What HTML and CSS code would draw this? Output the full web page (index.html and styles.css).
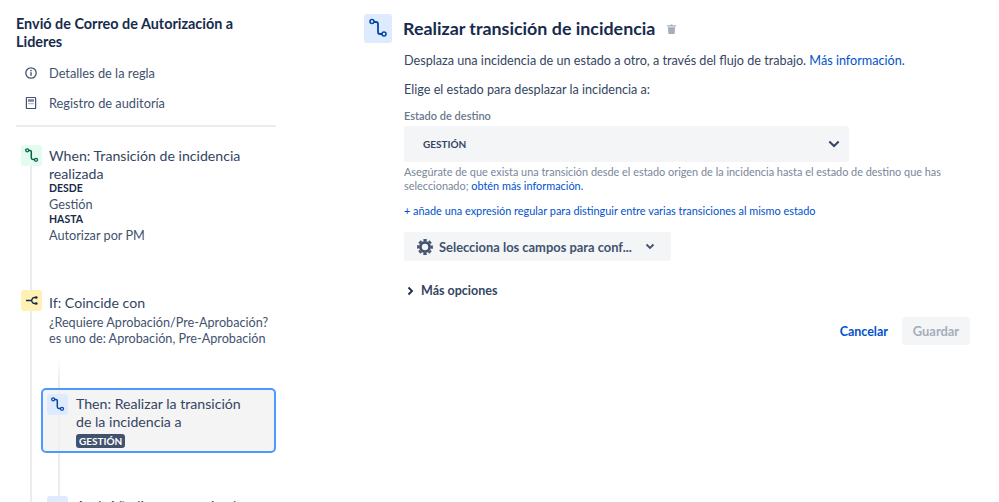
FILE: index.html
```html
<!DOCTYPE html>
<html lang="es">
<head>
  <meta charset="UTF-8">
  <title>Realizar transición de incidencia</title>
  <link rel="stylesheet" href="styles.css">
</head>
<body>
  <div class="container">
    <!-- Sidebar: rule title, links and the flow of steps -->
    <div class="sidebar">
      <h2 class="rule-title">Envió de Correo de Autorización a Lideres</h2>
      <div class="nav-item">
        <svg class="nav-icon" viewBox="0 0 14 14"><circle cx="7" cy="7" r="5.2" fill="none" stroke="#42526e" stroke-width="1.3"/><rect x="6.3" y="6.2" width="1.4" height="3.6" fill="#42526e"/><rect x="6.3" y="3.9" width="1.4" height="1.4" fill="#42526e"/></svg>
        <span>Detalles de la regla</span>
      </div>
      <div class="nav-item">
        <svg class="nav-icon" viewBox="0 0 14 14"><path d="M3 1.5h8a.6.6 0 0 1 .6.6v9.8a.6.6 0 0 1-.6.6H3a.6.6 0 0 1-.6-.6V2.100a.6.6 0 0 1 .6-.6z" fill="none" stroke="#42526e" stroke-width="1.2"/><rect x="4" y="3.200" width="6" height="2.600" fill="#7a869a"/><rect x="4" y="7.200" width="6" height="1" fill="#a5adba"/></svg>
        <span>Registro de auditoría</span>
      </div>
      <div class="divider"></div>

      <div class="flow">
        <div class="step step-when">
          <div class="step-icon icon-green">
            <svg viewBox="0 0 21 21"><path d="M7.500 5.500h1.600c.8 0 1.200.5 1.200 1.200v6.100c0 1.100.6 1.700 1.700 1.700h1.600" fill="none" stroke="#006644" stroke-width="1.500"/><circle cx="6.200" cy="5.300" r="1.500" fill="none" stroke="#006644" stroke-width="1.300"/><circle cx="15" cy="14.800" r="1.500" fill="none" stroke="#006644" stroke-width="1.300"/></svg>
          </div>
          <div class="step-body">
            <div class="step-title">When: Transición de incidencia realizada</div>
            <div class="field-label">DESDE</div>
            <div class="field-value">Gestión</div>
            <div class="field-label">HASTA</div>
            <div class="field-value">Autorizar por PM</div>
          </div>
        </div>

        <div class="step step-if">
          <div class="step-icon icon-yellow">
            <svg viewBox="0 0 21 21"><path d="M5 10.500h5.500M15.500 7.500h-2.300c-1 0-1.500.5-2 1.500l-.7 1.500.7 1.500c.5 1 1 1.500 2 1.500h2.300" fill="none" stroke="#172b4d" stroke-width="1.500"/><circle cx="15.300" cy="7.500" r="1.300" fill="#172b4d"/><circle cx="15.300" cy="13.500" r="1.300" fill="#172b4d"/></svg>
          </div>
          <div class="step-body">
            <div class="step-title">If: Coincide con</div>
            <div class="step-desc">¿Requiere Aprobación/Pre-Aprobación?<br>es uno de: Aprobación, Pre-Aprobación</div>
          </div>
        </div>

        <div class="branch">
          <div class="step step-then">
            <div class="step-icon icon-blue">
              <svg viewBox="0 0 21 21"><path d="M7.500 5.500h1.600c.8 0 1.200.5 1.200 1.200v6.100c0 1.100.6 1.700 1.700 1.700h1.600" fill="none" stroke="#0747a6" stroke-width="1.500"/><circle cx="6.200" cy="5.300" r="1.500" fill="none" stroke="#0747a6" stroke-width="1.300"/><circle cx="15" cy="14.800" r="1.500" fill="none" stroke="#0747a6" stroke-width="1.300"/></svg>
            </div>
            <div class="step-body">
              <div class="step-title">Then: Realizar la transición de la incidencia a</div>
              <span class="badge">GESTIÓN</span>
            </div>
          </div>

          <div class="step step-and">
            <div class="step-icon icon-blue"></div>
            <div class="step-body">
              <div class="step-title">And: Añadir comentario al</div>
            </div>
          </div>
        </div>
      </div>
    </div>

    <!-- Content: the form for the selected action -->
    <div class="content">
      <div class="action-head">
        <div class="action-icon">
          <svg viewBox="0 0 28 28"><path d="M10 8h2c1.200 0 2 .8 2 2v8c0 1.200.8 2 2 2h2" fill="none" stroke="#0747a6" stroke-width="1.800"/><circle cx="8" cy="7.500" r="2" fill="none" stroke="#0747a6" stroke-width="1.600"/><circle cx="20" cy="20" r="2" fill="none" stroke="#0747a6" stroke-width="1.600"/></svg>
        </div>
        <h1 class="action-title">Realizar transición de incidencia</h1>
        <svg class="trash" viewBox="0 0 12 12"><path d="M1 2h3.700l.4-1h1.800l.4 1H11v1.400H1z M2 4.200h8L9.300 11.500H2.700z" fill="#a5adba"/></svg>
      </div>

      <div class="form">
        <p class="text text-desc">Desplaza una incidencia de un estado a otro, a través del flujo de trabajo. <a class="link">Más información.</a></p>
        <p class="text text-choose">Elige el estado para desplazar la incidencia a:</p>
        <label class="form-label">Estado de destino</label>
        <div class="select">
          <span class="select-value">GESTIÓN</span>
          <svg class="chevron-lg" viewBox="0 0 12 8"><path d="M1.300 1.500 6 6l4.700-4.500" fill="none" stroke="#344563" stroke-width="2"/></svg>
        </div>
        <p class="help help-origin">Asegúrate de que exista una transición desde el estado origen de la incidencia hasta el estado de destino que has seleccionado; <a class="link">obtén más información.</a></p>
        <p class="help add-regex"><a class="link">+ añade una expresión regular para distinguir entre varias transiciones al mismo estado</a></p>

        <div class="fields-btn">
          <svg class="gear" viewBox="0 0 16 16"><circle cx="8" cy="8" r="4.600" fill="none" stroke="#42526e" stroke-width="2.800"/><circle cx="8" cy="8" r="6.900" fill="none" stroke="#42526e" stroke-width="2" stroke-dasharray="3.400 2" stroke-dashoffset="1.700"/></svg>
          <span class="fields-label">Selecciona los campos para conf...</span>
          <svg class="chevron-sm" viewBox="0 0 10 7"><path d="M1.500 1.500 5 5l3.500-3.500" fill="none" stroke="#42526e" stroke-width="1.800"/></svg>
        </div>

        <div class="more">
          <svg class="chevron-right" viewBox="0 0 7 10"><path d="M1.500 1.500 5 5 1.500 8.500" fill="none" stroke="#172b4d" stroke-width="1.800"/></svg>
          <span>Más opciones</span>
        </div>
      </div>

      <div class="actions">
        <a class="btn-cancel">Cancelar</a>
        <button class="btn-save" disabled>Guardar</button>
      </div>
    </div>
  </div>
</body>
</html>
```

FILE: styles.css
```css
html, body {
  margin: 0;
  height: 100%;
  overflow: hidden;
  background: #fff;
}
body {
  font-family: Lato, "Open Sans", Arial, sans-serif;
  color: #172b4d;
}
.container {
  display: grid;
  grid-template-columns: 260px 606px;
  column-gap: 88px;
  height: 502px;
  overflow: hidden;
  padding: 0 0 0 16px;
}

/* Sidebar */
.sidebar {
  padding-top: 15px;
}
.rule-title {
  margin: 0 0 7px;
  font-size: 14.400px;
  line-height: 18px;
  font-weight: 700;
  width: 240px;
}
.nav-item {
  display: flex;
  align-items: center;
  height: 30px;
  padding-left: 8px;
  font-size: 12.800px;
  color: #42526e;
}
.nav-icon {
  width: 14px;
  height: 14px;
  margin-right: 11px;
}
.divider {
  height: 2px;
  background: #ebecf0;
  margin-top: 7px;
}
.flow {
  position: relative;
  padding-top: 18px;
}
.flow::before {
  content: "";
  position: absolute;
  left: 14px;
  top: 18px;
  bottom: 0;
  width: 2px;
  background: #ebecf0;
}
.step {
  position: relative;
  display: flex;
}
.step-icon {
  flex: none;
  width: 21px;
  height: 21px;
  border-radius: 3px;
  margin-right: 7px;
}
.step-icon svg {
  display: block;
  width: 21px;
  height: 21px;
}
.icon-green { background: #e3fcef; }
.icon-yellow { background: #fff0b3; }
.icon-blue { background: #deebff; }
.step-when, .step-if {
  margin-left: 5px;
}
.step-when .step-body {
  padding-top: 2px;
}
.step-title {
  font-size: 14.150px;
  line-height: 18px;
  color: #344563;
}
.step-title + .field-label {
  margin-top: -2px;
}
.field-label {
  font-size: 10.500px;
  line-height: 15px;
  font-weight: 700;
  color: #172b4d;
}
.field-value {
  font-size: 12.700px;
  line-height: 16px;
  color: #42526e;
}
.step-if {
  margin-top: 47px;
}
.step-if .step-body {
  padding-top: 4px;
}
.step-desc {
  margin-top: 3px;
  font-size: 12.650px;
  line-height: 16px;
  color: #42526e;
}
.branch {
  position: relative;
  margin-top: 11px;
  padding-top: 30px;
}
.branch::before {
  content: "";
  position: absolute;
  left: 42px;
  top: 0;
  bottom: 0;
  width: 2px;
  background: linear-gradient(to bottom, #fff, #ebecf0 24px);
}
.step-then {
  margin-left: 25px;
  padding: 4px 30px 3px 4px;
  border: 2px solid #4c9aff;
  border-radius: 5px;
  background: rgba(240, 240, 240, 0.75);
}
.step-then .step-icon, .step-and .step-icon {
  margin-right: 8px;
}
.step-then .step-body {
  padding-top: 1px;
}
.badge {
  display: block;
  width: fit-content;
  margin-top: 3px;
  padding: 0 3px;
  border-radius: 3px;
  background: #42526e;
  color: #fff;
  font-size: 10px;
  line-height: 14px;
  font-weight: 700;
}
.step-and {
  margin: 43px 0 0 31px;
}
.step-and .step-body {
  padding-top: 1px;
}

/* Content */
.content {
  padding-top: 14px;
}
.action-head {
  display: flex;
  align-items: center;
}
.action-icon {
  width: 28px;
  height: 29px;
  background: #deebff;
  border-radius: 3px;
  margin-right: 11px;
}
.action-icon svg {
  display: block;
  width: 28px;
  height: 28px;
}
.action-title {
  margin: 0 11px 0 0;
  font-size: 17.850px;
  font-weight: 700;
  line-height: 29px;
}
.trash {
  width: 11px;
  height: 12px;
}
.form {
  padding-left: 40px;
}
.text {
  margin: 0;
  font-size: 12.650px;
  line-height: 18px;
  color: #344563;
}
.text-desc { margin-top: 9px; }
.text-choose { margin-top: 11px; }
.link {
  color: #0052cc;
}
.form-label {
  display: block;
  margin-top: 9px;
  font-size: 11px;
  line-height: 16px;
  font-weight: 600;
  color: #6b778c;
}
.select {
  display: flex;
  align-items: center;
  justify-content: space-between;
  width: 445px;
  height: 36px;
  margin-top: 2px;
  padding: 0 9px 0 19px;
  box-sizing: border-box;
  background: #f4f5f7;
  border-radius: 3px;
}
.select-value {
  font-size: 10px;
  font-weight: 700;
  color: #344563;
}
.chevron-lg {
  width: 12px;
  height: 8px;
}
.help {
  margin: 3px 0 0;
  font-size: 10.900px;
  line-height: 14px;
  color: #7a869a;
}
.help-origin {
  width: 550px;
}
.add-regex {
  margin-top: 11px;
}
.fields-btn {
  display: flex;
  align-items: center;
  width: 267px;
  height: 29px;
  margin-top: 14px;
  padding-left: 13px;
  box-sizing: border-box;
  background: #f4f5f7;
  border-radius: 3px;
}
.gear {
  width: 16px;
  height: 16px;
  margin-right: 6px;
}
.fields-label {
  font-size: 12.900px;
  font-weight: 700;
  white-space: nowrap;
  color: #42526e;
}
.chevron-sm {
  width: 10px;
  height: 7px;
  margin-left: 13px;
}
.more {
  display: flex;
  align-items: center;
  margin-top: 20px;
  padding-left: 3px;
  font-size: 12.500px;
  line-height: 20px;
  font-weight: 700;
  color: #344563;
}
.chevron-right {
  width: 7px;
  height: 10px;
  margin-right: 7px;
}
.actions {
  display: flex;
  justify-content: flex-end;
  align-items: center;
  margin-top: 16px;
}
.btn-cancel {
  font-size: 12.500px;
  font-weight: 700;
  color: #0052cc;
  margin-right: 14px;
}
.btn-save {
  width: 68px;
  height: 28px;
  padding: 0;
  border: none;
  border-radius: 3px;
  background: #f4f5f7;
  color: #a5adba;
  font-family: inherit;
  font-size: 12.900px;
  font-weight: 700;
}
```
